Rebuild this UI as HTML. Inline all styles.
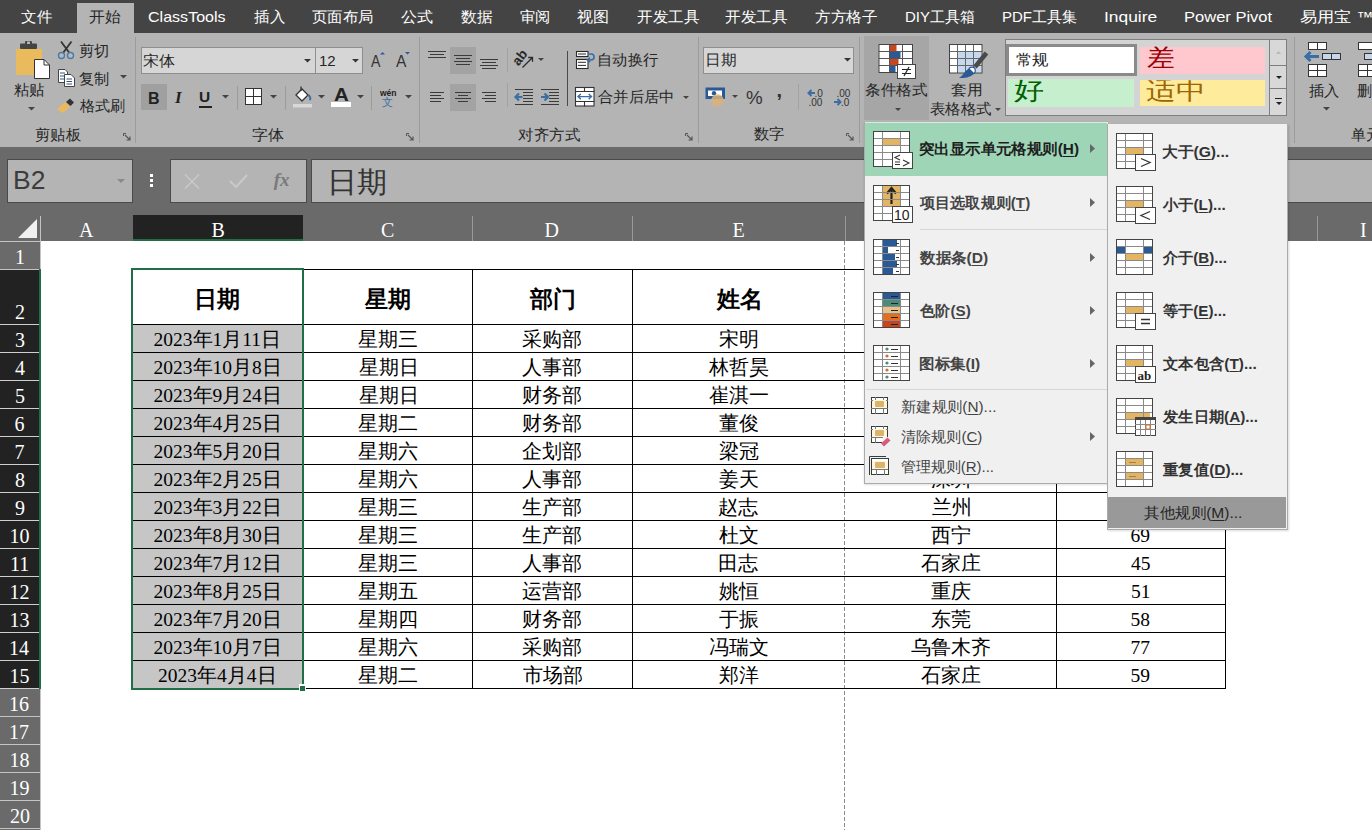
<!DOCTYPE html>
<html><head><meta charset="utf-8"><style>
html,body{margin:0;padding:0;width:1372px;height:830px;overflow:hidden;background:#fff}
.t{position:absolute;white-space:nowrap}
.b{position:absolute}
.s{position:absolute;overflow:visible}
body{font-family:'Liberation Sans',sans-serif}
u{text-decoration:underline;text-underline-offset:2px}
</style></head><body>
<div class="b" style="left:0px;top:0px;width:1372px;height:33px;background:#444444;"></div>
<div class="b" style="left:77px;top:3px;width:57px;height:30px;background:#b4b4b4;"></div>
<div class="t" style="left:21.0px;top:9.0px;font-size:15px;line-height:15px;color:#ffffff;font-weight:normal;font-family:'Liberation Sans',sans-serif;transform:scaleX(1.0345);transform-origin:0 0;">文件</div>
<div class="t" style="left:88.9px;top:9.0px;font-size:15px;line-height:15px;color:#262626;font-weight:normal;font-family:'Liberation Sans',sans-serif;transform:scaleX(1.0536);transform-origin:0 0;">开始</div>
<div class="t" style="left:147.9px;top:9.0px;font-size:15px;line-height:15px;color:#ffffff;font-weight:normal;font-family:'Liberation Sans',sans-serif;transform:scaleX(1.0704);transform-origin:0 0;">ClassTools</div>
<div class="t" style="left:254.0px;top:9.0px;font-size:15px;line-height:15px;color:#ffffff;font-weight:normal;font-family:'Liberation Sans',sans-serif;transform:scaleX(1.0345);transform-origin:0 0;">插入</div>
<div class="t" style="left:312.0px;top:9.0px;font-size:15px;line-height:15px;color:#ffffff;font-weight:normal;font-family:'Liberation Sans',sans-serif;transform:scaleX(1.0276);transform-origin:0 0;">页面布局</div>
<div class="t" style="left:400.6px;top:9.0px;font-size:15px;line-height:15px;color:#ffffff;font-weight:normal;font-family:'Liberation Sans',sans-serif;transform:scaleX(1.0714);transform-origin:0 0;">公式</div>
<div class="t" style="left:461.0px;top:9.0px;font-size:15px;line-height:15px;color:#ffffff;font-weight:normal;font-family:'Liberation Sans',sans-serif;transform:scaleX(1.0517);transform-origin:0 0;">数据</div>
<div class="t" style="left:520.0px;top:9.0px;font-size:15px;line-height:15px;color:#ffffff;font-weight:normal;font-family:'Liberation Sans',sans-serif;transform:scaleX(1.0143);transform-origin:0 0;">审阅</div>
<div class="t" style="left:577.4px;top:9.0px;font-size:15px;line-height:15px;color:#ffffff;font-weight:normal;font-family:'Liberation Sans',sans-serif;transform:scaleX(1.0714);transform-origin:0 0;">视图</div>
<div class="t" style="left:636.7px;top:9.0px;font-size:15px;line-height:15px;color:#ffffff;font-weight:normal;font-family:'Liberation Sans',sans-serif;transform:scaleX(1.0397);transform-origin:0 0;">开发工具</div>
<div class="t" style="left:725.0px;top:9.0px;font-size:15px;line-height:15px;color:#ffffff;font-weight:normal;font-family:'Liberation Sans',sans-serif;transform:scaleX(1.0414);transform-origin:0 0;">开发工具</div>
<div class="t" style="left:814.5px;top:9.0px;font-size:15px;line-height:15px;color:#ffffff;font-weight:normal;font-family:'Liberation Sans',sans-serif;transform:scaleX(1.0431);transform-origin:0 0;">方方格子</div>
<div class="t" style="left:905.0px;top:9.0px;font-size:15px;line-height:15px;color:#ffffff;font-weight:normal;font-family:'Liberation Sans',sans-serif;">DIY工具箱</div>
<div class="t" style="left:1002.0px;top:9.0px;font-size:15px;line-height:15px;color:#ffffff;font-weight:normal;font-family:'Liberation Sans',sans-serif;">PDF工具集</div>
<div class="t" style="left:1103.8px;top:9.0px;font-size:15px;line-height:15px;color:#ffffff;font-weight:normal;font-family:'Liberation Sans',sans-serif;transform:scaleX(1.1591);transform-origin:0 0;">Inquire</div>
<div class="t" style="left:1183.9px;top:9.0px;font-size:15px;line-height:15px;color:#ffffff;font-weight:normal;font-family:'Liberation Sans',sans-serif;transform:scaleX(1.1013);transform-origin:0 0;">Power Pivot</div>
<div class="t" style="left:1299.9px;top:9.0px;font-size:15px;line-height:15px;color:#ffffff;font-weight:normal;font-family:'Liberation Sans',sans-serif;transform:scaleX(1.1475);transform-origin:0 0;">易用宝 ™</div>
<div class="b" style="left:0px;top:33px;width:1372px;height:114px;background:#b4b4b4;"></div>
<svg class="s" style="left:14px;top:40px;" width="38" height="40" viewBox="0 0 38 40">
<rect x="2" y="9" width="26" height="26" fill="#e9bb5c"/>
<rect x="6" y="3.5" width="17" height="5.5" rx="1" fill="#444"/>
<rect x="11" y="1" width="7" height="5" rx="1" fill="#444"/><rect x="13" y="1.5" width="3" height="2.5" fill="#b4b4b4"/>
<path d="M20.5 19.5H30L35.5 25V38.5H20.5Z" fill="#fff" stroke="#333" stroke-width="1"/>
<path d="M30 19.5V25H35.5" fill="none" stroke="#333"/>
</svg>
<div class="t" style="left:13.7px;top:83.3px;font-size:14.5px;line-height:14.5px;color:#262626;font-weight:normal;font-family:'Liberation Sans',sans-serif;transform:scaleX(1.0241);transform-origin:0 0;">粘贴</div>
<svg class="s" style="left:27.5px;top:107.25px" width="7" height="3.5" viewBox="0 0 7 3.5"><path d="M0 0H7L3.5 3.5Z" fill="#444"/></svg>
<svg class="s" style="left:57px;top:41px;" width="19" height="18" viewBox="0 0 19 18">
<path d="M4 0.5L12.5 12M14.5 0.5L6 12" stroke="#333" stroke-width="1.8"/>
<circle cx="4.5" cy="14.5" r="3" fill="#a9bfd0" stroke="#55789a" stroke-width="1.4"/>
<circle cx="13.5" cy="14.5" r="3" fill="#a9bfd0" stroke="#55789a" stroke-width="1.4"/>
</svg>
<div class="t" style="left:79.0px;top:43.7px;font-size:14.5px;line-height:14.5px;color:#262626;font-weight:normal;font-family:'Liberation Sans',sans-serif;transform:scaleX(1.0179);transform-origin:0 0;">剪切</div>
<svg class="s" style="left:57px;top:68px;" width="20" height="20" viewBox="0 0 20 20">
<path d="M1.5 1.5H8L10.5 4V14.5H1.5Z" fill="#fff" stroke="#444"/>
<path d="M3 5H8M3 8H8M3 11H8" stroke="#34557a"/>
<path d="M7.5 6.5H14L17.5 10V18.5H7.5Z" fill="#fff" stroke="#444"/>
<path d="M9.5 11H15M9.5 13.5H15M9.5 16H15" stroke="#34557a"/>
</svg>
<div class="t" style="left:79.0px;top:71.5px;font-size:14.5px;line-height:14.5px;color:#262626;font-weight:normal;font-family:'Liberation Sans',sans-serif;transform:scaleX(1.0179);transform-origin:0 0;">复制</div>
<svg class="s" style="left:119.5px;top:75.25px" width="7" height="3.5" viewBox="0 0 7 3.5"><path d="M0 0H7L3.5 3.5Z" fill="#444"/></svg>
<svg class="s" style="left:55px;top:97px;" width="21" height="17" viewBox="0 0 21 17">
<path d="M2 12L10 5L15 10L8 16Z" fill="#e9b95e"/>
<path d="M11 5L15 1.5L19 5.5L15.5 9Z" fill="#333"/>
</svg>
<div class="t" style="left:80.0px;top:99.2px;font-size:14.5px;line-height:14.5px;color:#262626;font-weight:normal;font-family:'Liberation Sans',sans-serif;transform:scaleX(1.0091);transform-origin:0 0;">格式刷</div>
<div class="t" style="left:35.0px;top:127.5px;font-size:14.5px;line-height:14.5px;color:#262626;font-weight:normal;font-family:'Liberation Sans',sans-serif;transform:scaleX(1.0233);transform-origin:0 0;">剪贴板</div>
<svg class="s" style="left:123px;top:133px;" width="8" height="8" viewBox="0 0 8 8"><path d="M0.5 0.5H3M0.5 0.5V3" stroke="#555" fill="none"/><path d="M2 2L7 7M7 3.5V7H3.5" stroke="#555" fill="none" stroke-width="1.2"/></svg>
<div class="b" style="left:135px;top:37px;width:1px;height:106px;background:#9c9c9c;"></div>
<div class="b" style="left:141px;top:47px;width:175px;height:27px;background:#d6d6d6;box-shadow:inset 0 0 0 1px #8e8e8e"></div>
<div class="b" style="left:315px;top:47px;width:48px;height:27px;background:#d6d6d6;box-shadow:inset 0 0 0 1px #8e8e8e"></div>
<div class="t" style="left:142.9px;top:54.0px;font-size:14.5px;line-height:14.5px;color:#262626;font-weight:normal;font-family:'Liberation Sans',sans-serif;transform:scaleX(1.0714);transform-origin:0 0;">宋体</div>
<svg class="s" style="left:304.0px;top:58.75px" width="7" height="3.5" viewBox="0 0 7 3.5"><path d="M0 0H7L3.5 3.5Z" fill="#333"/></svg>
<div class="t" style="left:319.0px;top:53.0px;font-size:15px;line-height:15px;color:#262626;font-weight:normal;font-family:'Liberation Sans',sans-serif;">12</div>
<svg class="s" style="left:351.5px;top:58.75px" width="7" height="3.5" viewBox="0 0 7 3.5"><path d="M0 0H7L3.5 3.5Z" fill="#333"/></svg>
<div class="t" style="left:371.3px;top:53.6px;font-size:16px;line-height:16px;color:#333;font-weight:normal;font-family:'Liberation Sans',sans-serif;transform:scaleX(0.8818);transform-origin:0 0;">A</div>
<div class="t" style="left:396.0px;top:54.0px;font-size:16px;line-height:16px;color:#333;font-weight:normal;font-family:'Liberation Sans',sans-serif;transform:scaleX(0.9727);transform-origin:0 0;">A</div>
<svg class="s" style="left:379.5px;top:51.5px;" width="5" height="2.5" viewBox="0 0 5 2.5"><path d="M0 2.5L2.5 0L5 2.5Z" fill="#2a5a95"/></svg>
<svg class="s" style="left:404.5px;top:52px;" width="5" height="2.5" viewBox="0 0 5 2.5"><path d="M0 0H5L2.5 2.5Z" fill="#2a5a95"/></svg>
<div class="b" style="left:141px;top:84px;width:26px;height:26px;background:#a0a0a0;"></div>
<div class="t" style="left:148.0px;top:90.5px;font-size:16px;line-height:16px;color:#222;font-weight:bold;font-family:'Liberation Sans',sans-serif;">B</div>
<div class="t" style="left:175.0px;top:89.0px;font-size:17px;line-height:17px;color:#222;font-weight:bold;font-family:'Liberation Serif',serif;font-style:italic">I</div>
<div class="t" style="left:199.0px;top:88.5px;font-size:15.5px;line-height:15.5px;color:#222;font-weight:bold;font-family:'Liberation Sans',sans-serif;">U</div>
<div class="b" style="left:199px;top:106px;width:13px;height:1.5px;background:#222;"></div>
<svg class="s" style="left:221.5px;top:95.25px" width="7" height="3.5" viewBox="0 0 7 3.5"><path d="M0 0H7L3.5 3.5Z" fill="#444"/></svg>
<div class="b" style="left:237px;top:86px;width:1px;height:24px;background:#9c9c9c;"></div>
<svg class="s" style="left:245px;top:88px;" width="18" height="18" viewBox="0 0 18 18"><rect x="0.5" y="0.5" width="16" height="16" fill="#fff" stroke="#333"/><path d="M8.5 0V17M0 8.5H17" stroke="#333"/></svg>
<svg class="s" style="left:269.5px;top:95.25px" width="7" height="3.5" viewBox="0 0 7 3.5"><path d="M0 0H7L3.5 3.5Z" fill="#444"/></svg>
<div class="b" style="left:285px;top:86px;width:1px;height:24px;background:#9c9c9c;"></div>
<svg class="s" style="left:292px;top:85px;" width="22" height="23" viewBox="0 0 22 23">
<path d="M4 10L10 4L16 10L10 16Z" fill="#fff" stroke="#333" stroke-width="1.3"/>
<path d="M9 1.5V6" stroke="#333" stroke-width="1.3"/>
<path d="M16.5 10C18.5 12 19 14 17.5 15" stroke="#3a6ea5" stroke-width="2" fill="none"/>
<rect x="1" y="19" width="19" height="3.5" fill="#d8d8d8"/>
</svg>
<svg class="s" style="left:317.5px;top:95.25px" width="7" height="3.5" viewBox="0 0 7 3.5"><path d="M0 0H7L3.5 3.5Z" fill="#444"/></svg>
<div class="t" style="left:333.6px;top:85.9px;font-size:18px;line-height:18px;color:#222;font-weight:bold;font-family:'Liberation Sans',sans-serif;transform:scaleX(1.1364);transform-origin:0 0;">A</div>
<div class="b" style="left:331px;top:102px;width:20px;height:4.5px;background:#ffffff;"></div>
<svg class="s" style="left:356.5px;top:95.25px" width="7" height="3.5" viewBox="0 0 7 3.5"><path d="M0 0H7L3.5 3.5Z" fill="#444"/></svg>
<div class="b" style="left:371px;top:86px;width:1px;height:24px;background:#9c9c9c;"></div>
<div class="t" style="left:380.0px;top:88.5px;font-size:8.5px;line-height:8.5px;color:#222;font-weight:bold;font-family:'Liberation Sans',sans-serif;">wén</div>
<div class="t" style="left:382.0px;top:96.5px;font-size:11px;line-height:11px;color:#3a6ea5;font-weight:normal;font-family:'Liberation Sans',sans-serif;">文</div>
<svg class="s" style="left:404.5px;top:95.25px" width="7" height="3.5" viewBox="0 0 7 3.5"><path d="M0 0H7L3.5 3.5Z" fill="#444"/></svg>
<div class="t" style="left:251.9px;top:127.5px;font-size:14.5px;line-height:14.5px;color:#262626;font-weight:normal;font-family:'Liberation Sans',sans-serif;transform:scaleX(1.0714);transform-origin:0 0;">字体</div>
<svg class="s" style="left:406px;top:133px;" width="8" height="8" viewBox="0 0 8 8"><path d="M0.5 0.5H3M0.5 0.5V3" stroke="#555" fill="none"/><path d="M2 2L7 7M7 3.5V7H3.5" stroke="#555" fill="none" stroke-width="1.2"/></svg>
<div class="b" style="left:419px;top:37px;width:1px;height:106px;background:#9c9c9c;"></div>
<div class="b" style="left:428px;top:51px;width:18px;height:1.2000000000000028px;background:#3a3a3a;"></div>
<div class="b" style="left:430px;top:54px;width:14px;height:1.2000000000000028px;background:#3a3a3a;"></div>
<div class="b" style="left:428px;top:57px;width:18px;height:1.2000000000000028px;background:#3a3a3a;"></div>
<div class="b" style="left:450px;top:47px;width:26px;height:27px;background:#a3a3a3;"></div>
<div class="b" style="left:454px;top:55px;width:18px;height:1.2000000000000028px;background:#3a3a3a;"></div>
<div class="b" style="left:456px;top:58px;width:14px;height:1.2000000000000028px;background:#3a3a3a;"></div>
<div class="b" style="left:454px;top:61px;width:18px;height:1.2000000000000028px;background:#3a3a3a;"></div>
<div class="b" style="left:456px;top:64px;width:14px;height:1.2000000000000028px;background:#3a3a3a;"></div>
<div class="b" style="left:480px;top:59px;width:18px;height:1.2000000000000028px;background:#3a3a3a;"></div>
<div class="b" style="left:482px;top:62px;width:14px;height:1.2000000000000028px;background:#3a3a3a;"></div>
<div class="b" style="left:480px;top:65px;width:18px;height:1.2000000000000028px;background:#3a3a3a;"></div>
<div class="b" style="left:482px;top:68px;width:14px;height:1.2000000000000028px;background:#3a3a3a;"></div>
<div class="b" style="left:507px;top:48px;width:1px;height:24px;background:#a2a2a2;"></div>
<svg class="s" style="left:512px;top:49px;" width="24" height="20" viewBox="0 0 24 20">
<text x="0" y="0" font-family="Liberation Sans" font-size="13.5" font-weight="bold" fill="#2a2a2a" transform="translate(6.5 17.5) rotate(-52)">ab</text>
<path d="M10.5 18.5L20.5 8.5M16.2 8.5H20.5V12.8" stroke="#2a2a2a" stroke-width="1.3" fill="none"/>
</svg>
<svg class="s" style="left:538.3px;top:58.2px" width="6" height="3.0" viewBox="0 0 6 3.0"><path d="M0 0H6L3.0 3.0Z" fill="#444"/></svg>
<div class="b" style="left:567px;top:51px;width:1.3999999999999773px;height:55px;background:#4a4a4a;"></div>
<svg class="s" style="left:575px;top:50px;" width="22" height="20" viewBox="0 0 22 20">
<rect x="1.5" y="1.5" width="11.5" height="5" fill="#fff" stroke="#2a2a2a" stroke-width="1.1"/>
<path d="M3 4H11" stroke="#2a2a2a" stroke-width="1"/>
<rect x="1.5" y="9.5" width="11.5" height="9" fill="#fff" stroke="#2a2a2a" stroke-width="1.1"/>
<path d="M3 12.3H11M3 15.4H11" stroke="#2a2a2a" stroke-width="1"/>
<path d="M13 4H16.5C20 4 20 10 16 10H13M15 7.8L12.5 10L15 12.2" stroke="#3a6ea5" stroke-width="1.7" fill="none"/>
</svg>
<div class="t" style="left:597.0px;top:53.4px;font-size:14.5px;line-height:14.5px;color:#262626;font-weight:normal;font-family:'Liberation Sans',sans-serif;transform:scaleX(1.0172);transform-origin:0 0;">自动换行</div>
<div class="b" style="left:430px;top:92px;width:14px;height:1.2000000000000028px;background:#3a3a3a;"></div>
<div class="b" style="left:430px;top:95px;width:11px;height:1.2000000000000028px;background:#3a3a3a;"></div>
<div class="b" style="left:430px;top:98px;width:14px;height:1.2000000000000028px;background:#3a3a3a;"></div>
<div class="b" style="left:430px;top:101px;width:11px;height:1.2000000000000028px;background:#3a3a3a;"></div>
<div class="b" style="left:450px;top:84px;width:26px;height:27px;background:#a3a3a3;"></div>
<div class="b" style="left:455px;top:92px;width:16px;height:1.2000000000000028px;background:#3a3a3a;"></div>
<div class="b" style="left:458px;top:95px;width:10px;height:1.2000000000000028px;background:#3a3a3a;"></div>
<div class="b" style="left:455px;top:98px;width:16px;height:1.2000000000000028px;background:#3a3a3a;"></div>
<div class="b" style="left:458px;top:101px;width:10px;height:1.2000000000000028px;background:#3a3a3a;"></div>
<div class="b" style="left:482px;top:92px;width:14px;height:1.2000000000000028px;background:#3a3a3a;"></div>
<div class="b" style="left:485px;top:95px;width:11px;height:1.2000000000000028px;background:#3a3a3a;"></div>
<div class="b" style="left:482px;top:98px;width:14px;height:1.2000000000000028px;background:#3a3a3a;"></div>
<div class="b" style="left:485px;top:101px;width:11px;height:1.2000000000000028px;background:#3a3a3a;"></div>
<div class="b" style="left:507px;top:83px;width:1px;height:24px;background:#a2a2a2;"></div>
<svg class="s" style="left:514px;top:88px;" width="20" height="18" viewBox="0 0 20 18">
<path d="M1 1.5H19M9 4.5H19M9 7.5H19M9 10.5H19M9 13.5H19M1 16.5H19" stroke="#3a3a3a" stroke-width="1.1"/>
<path d="M1.5 9H8.5M5 5.5L1.5 9L5 12.5" stroke="#3a6ea5" stroke-width="2.2" fill="none"/>
</svg>
<svg class="s" style="left:540px;top:88px;" width="20" height="18" viewBox="0 0 20 18">
<path d="M1 1.5H19M9 4.5H19M9 7.5H19M9 10.5H19M9 13.5H19M1 16.5H19" stroke="#3a3a3a" stroke-width="1.1"/>
<path d="M1 9H8M4.5 5.5L8 9L4.5 12.5" stroke="#3a6ea5" stroke-width="2.2" fill="none"/>
</svg>
<svg class="s" style="left:575px;top:87px;" width="20" height="20" viewBox="0 0 20 20">
<rect x="0.5" y="0.5" width="18.5" height="18.5" fill="#fff" stroke="#333" stroke-width="1.1"/>
<path d="M0 4.5H19.5M0 14.5H19.5M9.5 0V4.5M9.5 14.5V19.5" stroke="#333" stroke-width="1.1"/>
<path d="M3 9.6H16.5M5.8 7L3 9.6L5.8 12.2M13.7 7L16.5 9.6L13.7 12.2" stroke="#3a6ea5" stroke-width="1.4" fill="none"/>
</svg>
<div class="t" style="left:597.5px;top:90.4px;font-size:14.5px;line-height:14.5px;color:#262626;font-weight:normal;font-family:'Liberation Sans',sans-serif;transform:scaleX(1.0208);transform-origin:0 0;">合并后居中</div>
<svg class="s" style="left:683.0px;top:95.5px" width="6" height="3.0" viewBox="0 0 6 3.0"><path d="M0 0H6L3.0 3.0Z" fill="#444"/></svg>
<div class="t" style="left:518.0px;top:127.5px;font-size:14.5px;line-height:14.5px;color:#262626;font-weight:normal;font-family:'Liberation Sans',sans-serif;transform:scaleX(1.0345);transform-origin:0 0;">对齐方式</div>
<svg class="s" style="left:685px;top:133px;" width="8" height="8" viewBox="0 0 8 8"><path d="M0.5 0.5H3M0.5 0.5V3" stroke="#555" fill="none"/><path d="M2 2L7 7M7 3.5V7H3.5" stroke="#555" fill="none" stroke-width="1.2"/></svg>
<div class="b" style="left:698px;top:37px;width:1px;height:106px;background:#9c9c9c;"></div>
<div class="b" style="left:703px;top:47px;width:151px;height:27px;background:#d6d6d6;box-shadow:inset 0 0 0 1px #8e8e8e"></div>
<div class="t" style="left:705.3px;top:52.8px;font-size:14.5px;line-height:14.5px;color:#262626;font-weight:normal;font-family:'Liberation Sans',sans-serif;transform:scaleX(1.0481);transform-origin:0 0;">日期</div>
<svg class="s" style="left:843.5px;top:58.25px" width="7" height="3.5" viewBox="0 0 7 3.5"><path d="M0 0H7L3.5 3.5Z" fill="#333"/></svg>
<svg class="s" style="left:705px;top:87px;" width="22" height="21" viewBox="0 0 22 21">
<rect x="0.5" y="0.5" width="19.5" height="11.5" fill="#2a5a95"/>
<path d="M3 3.5H17V9H3Z" fill="#fff"/>
<circle cx="9" cy="6.3" r="2.2" fill="#2a5a95"/>
<circle cx="12.5" cy="13.5" r="6.3" fill="#d9b27a" opacity="0.85"/>
</svg>
<svg class="s" style="left:732.0px;top:95.0px" width="6" height="3.0" viewBox="0 0 6 3.0"><path d="M0 0H6L3.0 3.0Z" fill="#444"/></svg>
<div class="t" style="left:745.9px;top:89.5px;font-size:17.5px;line-height:17.5px;color:#333;font-weight:normal;font-family:'Liberation Sans',sans-serif;transform:scaleX(1.0714);transform-origin:0 0;">%</div>
<div class="t" style="left:776.5px;top:79.5px;font-size:20px;line-height:20px;color:#333;font-weight:bold;font-family:'Liberation Sans',sans-serif;">,</div>
<div class="b" style="left:798px;top:84px;width:1px;height:26px;background:#a2a2a2;"></div>
<svg class="s" style="left:807px;top:88px;" width="19" height="19" viewBox="0 0 19 19">
<path d="M1.5 5H8M4.5 2L1.5 5L4.5 8" stroke="#3a6ea5" stroke-width="2" fill="none"/>
<text x="7.5" y="8.5" font-family="Liberation Sans" font-size="10" fill="#333">.0</text>
<text x="1.5" y="17.5" font-family="Liberation Sans" font-size="10" fill="#333">.00</text>
</svg>
<svg class="s" style="left:832px;top:88px;" width="19" height="19" viewBox="0 0 19 19">
<text x="4.5" y="8.5" font-family="Liberation Sans" font-size="10" fill="#333">.00</text>
<path d="M2 14H8.5M5.5 11L8.5 14L5.5 17" stroke="#3a6ea5" stroke-width="2" fill="none"/>
<text x="9" y="17.5" font-family="Liberation Sans" font-size="10" fill="#333">.0</text>
</svg>
<div class="t" style="left:754.0px;top:127.3px;font-size:14.5px;line-height:14.5px;color:#262626;font-weight:normal;font-family:'Liberation Sans',sans-serif;transform:scaleX(1.0207);transform-origin:0 0;">数字</div>
<svg class="s" style="left:846px;top:133px;" width="8" height="8" viewBox="0 0 8 8"><path d="M0.5 0.5H3M0.5 0.5V3" stroke="#555" fill="none"/><path d="M2 2L7 7M7 3.5V7H3.5" stroke="#555" fill="none" stroke-width="1.2"/></svg>
<div class="b" style="left:859px;top:37px;width:1px;height:106px;background:#9c9c9c;"></div>
<div class="b" style="left:864px;top:36px;width:65px;height:84px;background:#a6a6a6;"></div>
<svg class="s" style="left:878px;top:44px;" width="39" height="36" viewBox="0 0 39 36">
<rect x="1" y="0.5" width="33.5" height="28" fill="#fff"/>
<rect x="11.5" y="1" width="7" height="7" fill="#c8451e"/>
<rect x="11.5" y="8" width="11" height="7" fill="#2a5a95"/>
<rect x="11.5" y="15" width="9" height="7" fill="#c8451e"/>
<rect x="11.5" y="22" width="6" height="6.5" fill="#2a5a95"/>
<path d="M11.5 0V29M24.5 0V29M1 7.5H35M1 14.5H35M1 21.5H35" stroke="#555" stroke-width="1"/>
<rect x="1" y="0.5" width="33.5" height="28" fill="none" stroke="#444"/>
<rect x="19.5" y="20.5" width="18" height="14" fill="#fff" stroke="#444"/>
<path d="M24 25.5H33M24 29.5H33M31 23L26 32" stroke="#222" stroke-width="1.2"/>
</svg>
<div class="t" style="left:865.0px;top:83.3px;font-size:14.5px;line-height:14.5px;color:#262626;font-weight:normal;font-family:'Liberation Sans',sans-serif;transform:scaleX(1.0448);transform-origin:0 0;">条件格式</div>
<svg class="s" style="left:895.0px;top:107.5px" width="6" height="3.0" viewBox="0 0 6 3.0"><path d="M0 0H6L3.0 3.0Z" fill="#444"/></svg>
<svg class="s" style="left:948px;top:43px;" width="40" height="38" viewBox="0 0 40 38">
<rect x="1.5" y="1.5" width="32.5" height="28.5" fill="#fff"/>
<rect x="9.5" y="8.5" width="24" height="21" fill="#c5d8ee"/>
<path d="M9.5 1V30M17.5 1V30M25.5 1V30M1 8.5H34M1 15.5H34M1 22.5H34" stroke="#666" stroke-width="1"/>
<rect x="1.5" y="1.5" width="32.5" height="28.5" fill="none" stroke="#444"/>
<path d="M38.5 10L27 24" stroke="#4a4a4a" stroke-width="4.5"/>
<circle cx="24" cy="27.5" r="3.3" fill="#fff" stroke="#2a5a95" stroke-width="1.2"/>
<path d="M21.5 25.5C17 27 15 33 11 35C17 35.5 24 34 26 30Z" fill="#2a5a95"/>
</svg>
<div class="t" style="left:950.7px;top:83.3px;font-size:14.5px;line-height:14.5px;color:#262626;font-weight:normal;font-family:'Liberation Sans',sans-serif;transform:scaleX(1.0556);transform-origin:0 0;">套用</div>
<div class="t" style="left:929.8px;top:102.3px;font-size:14.5px;line-height:14.5px;color:#262626;font-weight:normal;font-family:'Liberation Sans',sans-serif;transform:scaleX(1.0310);transform-origin:0 0;">表格格式</div>
<svg class="s" style="left:995.3px;top:107.8px" width="6" height="3.0" viewBox="0 0 6 3.0"><path d="M0 0H6L3.0 3.0Z" fill="#444"/></svg>
<div class="b" style="left:1005px;top:39px;width:282px;height:77px;background:#d4d4d4;"></div>
<div class="b" style="left:1006px;top:44px;width:131px;height:32px;background:#ffffff;box-shadow:inset 0 0 0 3px #8a8a8a"></div>
<div class="t" style="left:1015.8px;top:51.5px;font-size:15px;line-height:15px;color:#222;font-weight:normal;font-family:'Liberation Sans',sans-serif;transform:scaleX(1.0933);transform-origin:0 0;">常规</div>
<div class="b" style="left:1140px;top:46.5px;width:125px;height:27.0px;background:#ffc7ce;"></div>
<div class="t" style="left:1146.6px;top:44.5px;font-size:25px;line-height:25px;color:#9c0006;font-weight:normal;font-family:'Liberation Sans',sans-serif;transform:scaleX(1.1087);transform-origin:0 0;clip-path:inset(2.0px 0 0 0);">差</div>
<div class="b" style="left:1008px;top:79px;width:126px;height:27.5px;background:#c6efce;"></div>
<div class="t" style="left:1014.3px;top:77.5px;font-size:25px;line-height:25px;color:#006100;font-weight:normal;font-family:'Liberation Sans',sans-serif;transform:scaleX(1.1957);transform-origin:0 0;clip-path:inset(2.0px 0 0 0);">好</div>
<div class="b" style="left:1140px;top:79.5px;width:125px;height:26.5px;background:#ffeb9c;"></div>
<div class="t" style="left:1145.8px;top:78.0px;font-size:25px;line-height:25px;color:#9c6500;font-weight:normal;font-family:'Liberation Sans',sans-serif;transform:scaleX(1.1870);transform-origin:0 0;clip-path:inset(2.3px 0 0 0);">适中</div>
<div class="b" style="left:1270px;top:40px;width:16px;height:75px;background:#d8d8d8;"></div>
<div class="b" style="left:1269px;top:39px;width:1px;height:77px;background:#7e7e7e;"></div>
<div class="b" style="left:1269px;top:65px;width:18px;height:1px;background:#7e7e7e;"></div>
<div class="b" style="left:1269px;top:88px;width:18px;height:1px;background:#7e7e7e;"></div>
<div class="b" style="left:1005px;top:39px;width:282px;height:77px;background:transparent;box-shadow:inset 0 0 0 1px #7e7e7e"></div>
<svg class="s" style="left:1276px;top:50.5px;" width="5" height="3" viewBox="0 0 5 3"><path d="M0 3H5L2.5 0Z" fill="#b8b8b8"/></svg>
<svg class="s" style="left:1275.5px;top:75.5px" width="6" height="3.0" viewBox="0 0 6 3.0"><path d="M0 0H6L3.0 3.0Z" fill="#222"/></svg>
<div class="b" style="left:1275px;top:98px;width:7px;height:1.2000000000000028px;background:#222;"></div>
<svg class="s" style="left:1275.5px;top:101.5px" width="6" height="3.0" viewBox="0 0 6 3.0"><path d="M0 0H6L3.0 3.0Z" fill="#222"/></svg>
<div class="b" style="left:1294px;top:37px;width:1px;height:106px;background:#9c9c9c;"></div>
<svg class="s" style="left:1304px;top:41px;" width="40" height="37" viewBox="0 0 40 37">
<rect x="4.5" y="1.5" width="18" height="7" fill="#fff" stroke="#333"/><path d="M13.5 1V9" stroke="#333"/>
<rect x="18.5" y="12.5" width="18" height="6" fill="#c5d6ea" stroke="#333"/><path d="M27.5 12V19" stroke="#333"/>
<path d="M2 15.5H15M6.5 11L2 15.5L6.5 20" stroke="#3a6ea5" stroke-width="3" fill="none"/>
<rect x="4.5" y="23.5" width="18" height="12" fill="#fff" stroke="#333"/><path d="M13.5 23V36M4 29.5H23" stroke="#333"/>
</svg>
<div class="t" style="left:1309.0px;top:83.5px;font-size:14.5px;line-height:14.5px;color:#262626;font-weight:normal;font-family:'Liberation Sans',sans-serif;transform:scaleX(1.0207);transform-origin:0 0;">插入</div>
<svg class="s" style="left:1322.5px;top:107.25px" width="7" height="3.5" viewBox="0 0 7 3.5"><path d="M0 0H7L3.5 3.5Z" fill="#444"/></svg>
<svg class="s" style="left:1357px;top:41px;" width="16" height="37" viewBox="0 0 16 37">
<rect x="1.5" y="1.5" width="20" height="7" fill="#fff" stroke="#333"/>
<rect x="7.5" y="12.5" width="20" height="6" fill="#c5d6ea" stroke="#333"/>
<rect x="1.5" y="23.5" width="20" height="12" fill="#fff" stroke="#333"/><path d="M10.5 23V36M1 29.5H22" stroke="#333"/>
</svg>
<div class="t" style="left:1357.0px;top:83.5px;font-size:14.5px;line-height:14.5px;color:#262626;font-weight:normal;font-family:'Liberation Sans',sans-serif;">删除</div>
<div class="t" style="left:1351.0px;top:127.5px;font-size:14.5px;line-height:14.5px;color:#262626;font-weight:normal;font-family:'Liberation Sans',sans-serif;">单元格</div>
<div class="b" style="left:0px;top:147px;width:1372px;height:68px;background:#6a6a6a;"></div>
<div class="b" style="left:7px;top:159px;width:126px;height:44px;background:#b4b4b4;box-shadow:inset 0 0 0 1px #4a4a4a"></div>
<div class="t" style="left:13.0px;top:166.5px;font-size:26px;line-height:26px;color:#3c3c3c;font-weight:normal;font-family:'Liberation Sans',sans-serif;transform:scaleX(1.0172);transform-origin:0 0;">B2</div>
<svg class="s" style="left:117.0px;top:178.5px" width="8" height="4.0" viewBox="0 0 8 4.0"><path d="M0 0H8L4.0 4.0Z" fill="#8a8a8a"/></svg>
<div class="b" style="left:150px;top:174px;width:3px;height:3px;background:#ffffff;"></div>
<div class="b" style="left:150px;top:179px;width:3px;height:3px;background:#ffffff;"></div>
<div class="b" style="left:150px;top:184px;width:3px;height:3px;background:#ffffff;"></div>
<div class="b" style="left:170px;top:159px;width:137px;height:44px;background:#b4b4b4;box-shadow:inset 0 0 0 1px #4a4a4a"></div>
<svg class="s" style="left:182px;top:172px;" width="22" height="18" viewBox="0 0 22 18"><path d="M3 2.5L17 16.5M17 2.5L3 16.5" stroke="#c9c9c9" stroke-width="1.6"/></svg>
<svg class="s" style="left:228px;top:172px;" width="22" height="18" viewBox="0 0 22 18"><path d="M2 9L8 15L19 3" stroke="#c9c9c9" stroke-width="2" fill="none"/></svg>
<div class="t" style="left:273.7px;top:169.7px;font-size:19px;line-height:19px;color:#7a7a7a;font-weight:bold;font-family:'Liberation Serif',serif;font-style:italic;letter-spacing:-1pxtransform:scaleX(1.2143);transform-origin:0 0;">fx</div>
<div class="b" style="left:311px;top:159px;width:1069px;height:44px;background:#b4b4b4;box-shadow:inset 0 0 0 1px #4a4a4a"></div>
<div class="t" style="left:326.8px;top:167.5px;font-size:29px;line-height:29px;color:#333333;font-weight:normal;font-family:'Liberation Sans',sans-serif;transform:scaleX(1.0385);transform-origin:0 0;">日期</div>
<div class="b" style="left:0px;top:215px;width:1372px;height:26px;background:#6a6a6a;"></div>
<div class="b" style="left:0px;top:215px;width:40px;height:26px;background:#6a6a6a;"></div>
<svg class="s" style="left:18px;top:219px;" width="19" height="19" viewBox="0 0 19 19"><path d="M19 0V19H0Z" fill="#f0f0f0"/></svg>
<div class="b" style="left:133px;top:216px;width:1px;height:25px;background:#9a9a9a;"></div>
<div class="t" style="left:79.0px;top:220.0px;font-size:20px;line-height:20px;color:#ffffff;font-weight:normal;font-family:'Liberation Serif',serif;">A</div>
<div class="b" style="left:133px;top:215px;width:170px;height:26px;background:#222222;"></div>
<div class="b" style="left:133px;top:239px;width:170px;height:2px;background:#1f6e45;"></div>
<div class="t" style="left:211.5px;top:220.0px;font-size:20px;line-height:20px;color:#ffffff;font-weight:normal;font-family:'Liberation Serif',serif;">B</div>
<div class="b" style="left:472px;top:216px;width:1px;height:25px;background:#9a9a9a;"></div>
<div class="t" style="left:381.0px;top:220.0px;font-size:20px;line-height:20px;color:#ffffff;font-weight:normal;font-family:'Liberation Serif',serif;">C</div>
<div class="b" style="left:632px;top:216px;width:1px;height:25px;background:#9a9a9a;"></div>
<div class="t" style="left:544.5px;top:220.0px;font-size:20px;line-height:20px;color:#ffffff;font-weight:normal;font-family:'Liberation Serif',serif;">D</div>
<div class="b" style="left:845px;top:216px;width:1px;height:25px;background:#9a9a9a;"></div>
<div class="t" style="left:732.5px;top:220.0px;font-size:20px;line-height:20px;color:#ffffff;font-weight:normal;font-family:'Liberation Serif',serif;">E</div>
<div class="b" style="left:1056px;top:216px;width:1px;height:25px;background:#9a9a9a;"></div>
<div class="t" style="left:944.5px;top:220.0px;font-size:20px;line-height:20px;color:#ffffff;font-weight:normal;font-family:'Liberation Serif',serif;">F</div>
<div class="b" style="left:1225px;top:216px;width:1px;height:25px;background:#9a9a9a;"></div>
<div class="t" style="left:1133.0px;top:220.0px;font-size:20px;line-height:20px;color:#ffffff;font-weight:normal;font-family:'Liberation Serif',serif;">G</div>
<div class="b" style="left:1317px;top:216px;width:1px;height:25px;background:#9a9a9a;"></div>
<div class="t" style="left:1263.5px;top:220.0px;font-size:20px;line-height:20px;color:#ffffff;font-weight:normal;font-family:'Liberation Serif',serif;">H</div>
<div class="b" style="left:1410px;top:216px;width:1px;height:25px;background:#9a9a9a;"></div>
<div class="t" style="left:1360.0px;top:220.0px;font-size:20px;line-height:20px;color:#ffffff;font-weight:normal;font-family:'Liberation Serif',serif;">I</div>
<div class="b" style="left:0px;top:241px;width:41px;height:589px;background:#6a6a6a;"></div>
<div class="b" style="left:0px;top:241px;width:40px;height:28px;background:#6a6a6a;"></div>
<div class="t" style="left:15.0px;top:246.5px;font-size:20px;line-height:20px;color:#ffffff;font-weight:normal;font-family:'Liberation Serif',serif;">1</div>
<div class="b" style="left:0px;top:269px;width:40px;height:55px;background:#222222;"></div>
<div class="t" style="left:15.0px;top:301.5px;font-size:20px;line-height:20px;color:#ffffff;font-weight:normal;font-family:'Liberation Serif',serif;">2</div>
<div class="b" style="left:0px;top:324px;width:40px;height:28px;background:#222222;"></div>
<div class="t" style="left:15.0px;top:329.5px;font-size:20px;line-height:20px;color:#ffffff;font-weight:normal;font-family:'Liberation Serif',serif;">3</div>
<div class="b" style="left:0px;top:352px;width:40px;height:28px;background:#222222;"></div>
<div class="t" style="left:15.0px;top:357.5px;font-size:20px;line-height:20px;color:#ffffff;font-weight:normal;font-family:'Liberation Serif',serif;">4</div>
<div class="b" style="left:0px;top:380px;width:40px;height:28px;background:#222222;"></div>
<div class="t" style="left:15.0px;top:385.5px;font-size:20px;line-height:20px;color:#ffffff;font-weight:normal;font-family:'Liberation Serif',serif;">5</div>
<div class="b" style="left:0px;top:408px;width:40px;height:28px;background:#222222;"></div>
<div class="t" style="left:14.5px;top:413.5px;font-size:20px;line-height:20px;color:#ffffff;font-weight:normal;font-family:'Liberation Serif',serif;">6</div>
<div class="b" style="left:0px;top:436px;width:40px;height:28px;background:#222222;"></div>
<div class="t" style="left:14.5px;top:441.5px;font-size:20px;line-height:20px;color:#ffffff;font-weight:normal;font-family:'Liberation Serif',serif;">7</div>
<div class="b" style="left:0px;top:464px;width:40px;height:28px;background:#222222;"></div>
<div class="t" style="left:15.0px;top:469.5px;font-size:20px;line-height:20px;color:#ffffff;font-weight:normal;font-family:'Liberation Serif',serif;">8</div>
<div class="b" style="left:0px;top:492px;width:40px;height:28px;background:#222222;"></div>
<div class="t" style="left:15.0px;top:497.5px;font-size:20px;line-height:20px;color:#ffffff;font-weight:normal;font-family:'Liberation Serif',serif;">9</div>
<div class="b" style="left:0px;top:520px;width:40px;height:28px;background:#222222;"></div>
<div class="t" style="left:9.5px;top:525.5px;font-size:20px;line-height:20px;color:#ffffff;font-weight:normal;font-family:'Liberation Serif',serif;">10</div>
<div class="b" style="left:0px;top:548px;width:40px;height:28px;background:#222222;"></div>
<div class="t" style="left:10.0px;top:553.5px;font-size:20px;line-height:20px;color:#ffffff;font-weight:normal;font-family:'Liberation Serif',serif;">11</div>
<div class="b" style="left:0px;top:576px;width:40px;height:28px;background:#222222;"></div>
<div class="t" style="left:9.5px;top:581.5px;font-size:20px;line-height:20px;color:#ffffff;font-weight:normal;font-family:'Liberation Serif',serif;">12</div>
<div class="b" style="left:0px;top:604px;width:40px;height:28px;background:#222222;"></div>
<div class="t" style="left:9.5px;top:609.5px;font-size:20px;line-height:20px;color:#ffffff;font-weight:normal;font-family:'Liberation Serif',serif;">13</div>
<div class="b" style="left:0px;top:632px;width:40px;height:28px;background:#222222;"></div>
<div class="t" style="left:9.0px;top:637.5px;font-size:20px;line-height:20px;color:#ffffff;font-weight:normal;font-family:'Liberation Serif',serif;">14</div>
<div class="b" style="left:0px;top:660px;width:40px;height:28px;background:#222222;"></div>
<div class="t" style="left:9.5px;top:665.5px;font-size:20px;line-height:20px;color:#ffffff;font-weight:normal;font-family:'Liberation Serif',serif;">15</div>
<div class="b" style="left:0px;top:688px;width:40px;height:28px;background:#6a6a6a;"></div>
<div class="t" style="left:9.0px;top:693.5px;font-size:20px;line-height:20px;color:#ffffff;font-weight:normal;font-family:'Liberation Serif',serif;">16</div>
<div class="b" style="left:0px;top:716px;width:40px;height:28px;background:#6a6a6a;"></div>
<div class="t" style="left:9.0px;top:721.5px;font-size:20px;line-height:20px;color:#ffffff;font-weight:normal;font-family:'Liberation Serif',serif;">17</div>
<div class="b" style="left:0px;top:744px;width:40px;height:28px;background:#6a6a6a;"></div>
<div class="t" style="left:9.5px;top:749.5px;font-size:20px;line-height:20px;color:#ffffff;font-weight:normal;font-family:'Liberation Serif',serif;">18</div>
<div class="b" style="left:0px;top:772px;width:40px;height:28px;background:#6a6a6a;"></div>
<div class="t" style="left:9.5px;top:777.5px;font-size:20px;line-height:20px;color:#ffffff;font-weight:normal;font-family:'Liberation Serif',serif;">19</div>
<div class="b" style="left:0px;top:800px;width:40px;height:28px;background:#6a6a6a;"></div>
<div class="t" style="left:10.0px;top:805.5px;font-size:20px;line-height:20px;color:#ffffff;font-weight:normal;font-family:'Liberation Serif',serif;">20</div>
<div class="b" style="left:0px;top:269px;width:40px;height:1px;background:#c4c4c4;"></div>
<div class="b" style="left:0px;top:324px;width:40px;height:1px;background:#cfcfcf;"></div>
<div class="b" style="left:0px;top:352px;width:40px;height:1px;background:#cfcfcf;"></div>
<div class="b" style="left:0px;top:380px;width:40px;height:1px;background:#cfcfcf;"></div>
<div class="b" style="left:0px;top:408px;width:40px;height:1px;background:#cfcfcf;"></div>
<div class="b" style="left:0px;top:436px;width:40px;height:1px;background:#cfcfcf;"></div>
<div class="b" style="left:0px;top:464px;width:40px;height:1px;background:#cfcfcf;"></div>
<div class="b" style="left:0px;top:492px;width:40px;height:1px;background:#cfcfcf;"></div>
<div class="b" style="left:0px;top:520px;width:40px;height:1px;background:#cfcfcf;"></div>
<div class="b" style="left:0px;top:548px;width:40px;height:1px;background:#cfcfcf;"></div>
<div class="b" style="left:0px;top:576px;width:40px;height:1px;background:#cfcfcf;"></div>
<div class="b" style="left:0px;top:604px;width:40px;height:1px;background:#cfcfcf;"></div>
<div class="b" style="left:0px;top:632px;width:40px;height:1px;background:#cfcfcf;"></div>
<div class="b" style="left:0px;top:660px;width:40px;height:1px;background:#cfcfcf;"></div>
<div class="b" style="left:0px;top:688px;width:40px;height:1px;background:#cfcfcf;"></div>
<div class="b" style="left:0px;top:716px;width:40px;height:1px;background:#c4c4c4;"></div>
<div class="b" style="left:0px;top:744px;width:40px;height:1px;background:#c4c4c4;"></div>
<div class="b" style="left:0px;top:772px;width:40px;height:1px;background:#c4c4c4;"></div>
<div class="b" style="left:0px;top:800px;width:40px;height:1px;background:#c4c4c4;"></div>
<div class="b" style="left:0px;top:828px;width:40px;height:1px;background:#c4c4c4;"></div>
<div class="b" style="left:0px;top:241px;width:40px;height:1px;background:#c4c4c4;"></div>
<div class="b" style="left:40px;top:216px;width:1px;height:614px;background:#c4c4c4;"></div>
<div class="b" style="left:39px;top:269px;width:2px;height:420px;background:#1f6e45;"></div>
<div class="b" style="left:41px;top:241px;width:1331px;height:589px;background:#ffffff;"></div>
<div class="b" style="left:133px;top:324px;width:170px;height:364px;background:#c6c6c6;"></div>
<div class="b" style="left:844px;top:241px;width:1px;height:589px;background:repeating-linear-gradient(#8a8a8a 0 4px,transparent 4px 6px)"></div>
<div class="b" style="left:132px;top:269px;width:1px;height:420px;background:#000;"></div>
<div class="b" style="left:303px;top:269px;width:1px;height:420px;background:#000;"></div>
<div class="b" style="left:472px;top:269px;width:1px;height:420px;background:#000;"></div>
<div class="b" style="left:632px;top:269px;width:1px;height:420px;background:#000;"></div>
<div class="b" style="left:1056px;top:269px;width:1px;height:420px;background:#000;"></div>
<div class="b" style="left:1225px;top:269px;width:1px;height:420px;background:#000;"></div>
<div class="b" style="left:132px;top:269px;width:1094px;height:1px;background:#000;"></div>
<div class="b" style="left:132px;top:324px;width:1094px;height:1px;background:#000;"></div>
<div class="b" style="left:132px;top:352px;width:1094px;height:1px;background:#000;"></div>
<div class="b" style="left:132px;top:380px;width:1094px;height:1px;background:#000;"></div>
<div class="b" style="left:132px;top:408px;width:1094px;height:1px;background:#000;"></div>
<div class="b" style="left:132px;top:436px;width:1094px;height:1px;background:#000;"></div>
<div class="b" style="left:132px;top:464px;width:1094px;height:1px;background:#000;"></div>
<div class="b" style="left:132px;top:492px;width:1094px;height:1px;background:#000;"></div>
<div class="b" style="left:132px;top:520px;width:1094px;height:1px;background:#000;"></div>
<div class="b" style="left:132px;top:548px;width:1094px;height:1px;background:#000;"></div>
<div class="b" style="left:132px;top:576px;width:1094px;height:1px;background:#000;"></div>
<div class="b" style="left:132px;top:604px;width:1094px;height:1px;background:#000;"></div>
<div class="b" style="left:132px;top:632px;width:1094px;height:1px;background:#000;"></div>
<div class="b" style="left:132px;top:660px;width:1094px;height:1px;background:#000;"></div>
<div class="b" style="left:132px;top:688px;width:1094px;height:1px;background:#000;"></div>
<div class="t" style="left:193.5px;top:287.5px;font-size:23px;line-height:23px;color:#000;font-weight:bold;font-family:'Liberation Serif',serif;">日期</div>
<div class="t" style="left:365.0px;top:287.5px;font-size:23px;line-height:23px;color:#000;font-weight:bold;font-family:'Liberation Serif',serif;">星期</div>
<div class="t" style="left:530.0px;top:287.5px;font-size:23px;line-height:23px;color:#000;font-weight:bold;font-family:'Liberation Serif',serif;">部门</div>
<div class="t" style="left:717.0px;top:287.5px;font-size:23px;line-height:23px;color:#000;font-weight:bold;font-family:'Liberation Serif',serif;">姓名</div>
<div class="t" style="left:927.5px;top:287.5px;font-size:23px;line-height:23px;color:#000;font-weight:bold;font-family:'Liberation Serif',serif;">城市</div>
<div class="t" style="left:1117.5px;top:287.5px;font-size:23px;line-height:23px;color:#000;font-weight:bold;font-family:'Liberation Serif',serif;">成绩</div>
<div class="t" style="left:153.5px;top:329.5px;font-size:19.5px;line-height:19.5px;color:#000;font-weight:normal;font-family:'Liberation Serif',serif;">2023年1月11日</div>
<div class="t" style="left:357.5px;top:329.5px;font-size:19.5px;line-height:19.5px;color:#000;font-weight:normal;font-family:'Liberation Serif',serif;">星期三</div>
<div class="t" style="left:522.0px;top:329.5px;font-size:19.5px;line-height:19.5px;color:#000;font-weight:normal;font-family:'Liberation Serif',serif;">采购部</div>
<div class="t" style="left:719.0px;top:329.5px;font-size:19.5px;line-height:19.5px;color:#000;font-weight:normal;font-family:'Liberation Serif',serif;">宋明</div>
<div class="t" style="left:931.0px;top:329.5px;font-size:19.5px;line-height:19.5px;color:#000;font-weight:normal;font-family:'Liberation Serif',serif;">北京</div>
<div class="t" style="left:1130.5px;top:329.5px;font-size:19.5px;line-height:19.5px;color:#000;font-weight:normal;font-family:'Liberation Serif',serif;">80</div>
<div class="t" style="left:153.5px;top:357.5px;font-size:19.5px;line-height:19.5px;color:#000;font-weight:normal;font-family:'Liberation Serif',serif;">2023年10月8日</div>
<div class="t" style="left:358.5px;top:357.5px;font-size:19.5px;line-height:19.5px;color:#000;font-weight:normal;font-family:'Liberation Serif',serif;">星期日</div>
<div class="t" style="left:522.0px;top:357.5px;font-size:19.5px;line-height:19.5px;color:#000;font-weight:normal;font-family:'Liberation Serif',serif;">人事部</div>
<div class="t" style="left:709.0px;top:357.5px;font-size:19.5px;line-height:19.5px;color:#000;font-weight:normal;font-family:'Liberation Serif',serif;">林哲昊</div>
<div class="t" style="left:931.0px;top:357.5px;font-size:19.5px;line-height:19.5px;color:#000;font-weight:normal;font-family:'Liberation Serif',serif;">上海</div>
<div class="t" style="left:1130.5px;top:357.5px;font-size:19.5px;line-height:19.5px;color:#000;font-weight:normal;font-family:'Liberation Serif',serif;">72</div>
<div class="t" style="left:153.5px;top:385.5px;font-size:19.5px;line-height:19.5px;color:#000;font-weight:normal;font-family:'Liberation Serif',serif;">2023年9月24日</div>
<div class="t" style="left:358.5px;top:385.5px;font-size:19.5px;line-height:19.5px;color:#000;font-weight:normal;font-family:'Liberation Serif',serif;">星期日</div>
<div class="t" style="left:522.0px;top:385.5px;font-size:19.5px;line-height:19.5px;color:#000;font-weight:normal;font-family:'Liberation Serif',serif;">财务部</div>
<div class="t" style="left:708.5px;top:385.5px;font-size:19.5px;line-height:19.5px;color:#000;font-weight:normal;font-family:'Liberation Serif',serif;">崔淇一</div>
<div class="t" style="left:931.0px;top:385.5px;font-size:19.5px;line-height:19.5px;color:#000;font-weight:normal;font-family:'Liberation Serif',serif;">广州</div>
<div class="t" style="left:1130.5px;top:385.5px;font-size:19.5px;line-height:19.5px;color:#000;font-weight:normal;font-family:'Liberation Serif',serif;">66</div>
<div class="t" style="left:153.5px;top:413.5px;font-size:19.5px;line-height:19.5px;color:#000;font-weight:normal;font-family:'Liberation Serif',serif;">2023年4月25日</div>
<div class="t" style="left:357.5px;top:413.5px;font-size:19.5px;line-height:19.5px;color:#000;font-weight:normal;font-family:'Liberation Serif',serif;">星期二</div>
<div class="t" style="left:522.0px;top:413.5px;font-size:19.5px;line-height:19.5px;color:#000;font-weight:normal;font-family:'Liberation Serif',serif;">财务部</div>
<div class="t" style="left:718.5px;top:413.5px;font-size:19.5px;line-height:19.5px;color:#000;font-weight:normal;font-family:'Liberation Serif',serif;">董俊</div>
<div class="t" style="left:931.5px;top:413.5px;font-size:19.5px;line-height:19.5px;color:#000;font-weight:normal;font-family:'Liberation Serif',serif;">杭州</div>
<div class="t" style="left:1131.0px;top:413.5px;font-size:19.5px;line-height:19.5px;color:#000;font-weight:normal;font-family:'Liberation Serif',serif;">91</div>
<div class="t" style="left:153.5px;top:441.5px;font-size:19.5px;line-height:19.5px;color:#000;font-weight:normal;font-family:'Liberation Serif',serif;">2023年5月20日</div>
<div class="t" style="left:357.5px;top:441.5px;font-size:19.5px;line-height:19.5px;color:#000;font-weight:normal;font-family:'Liberation Serif',serif;">星期六</div>
<div class="t" style="left:522.0px;top:441.5px;font-size:19.5px;line-height:19.5px;color:#000;font-weight:normal;font-family:'Liberation Serif',serif;">企划部</div>
<div class="t" style="left:718.5px;top:441.5px;font-size:19.5px;line-height:19.5px;color:#000;font-weight:normal;font-family:'Liberation Serif',serif;">梁冠</div>
<div class="t" style="left:930.5px;top:441.5px;font-size:19.5px;line-height:19.5px;color:#000;font-weight:normal;font-family:'Liberation Serif',serif;">成都</div>
<div class="t" style="left:1130.5px;top:441.5px;font-size:19.5px;line-height:19.5px;color:#000;font-weight:normal;font-family:'Liberation Serif',serif;">83</div>
<div class="t" style="left:153.5px;top:469.5px;font-size:19.5px;line-height:19.5px;color:#000;font-weight:normal;font-family:'Liberation Serif',serif;">2023年2月25日</div>
<div class="t" style="left:357.5px;top:469.5px;font-size:19.5px;line-height:19.5px;color:#000;font-weight:normal;font-family:'Liberation Serif',serif;">星期六</div>
<div class="t" style="left:522.0px;top:469.5px;font-size:19.5px;line-height:19.5px;color:#000;font-weight:normal;font-family:'Liberation Serif',serif;">人事部</div>
<div class="t" style="left:718.5px;top:469.5px;font-size:19.5px;line-height:19.5px;color:#000;font-weight:normal;font-family:'Liberation Serif',serif;">姜天</div>
<div class="t" style="left:931.0px;top:469.5px;font-size:19.5px;line-height:19.5px;color:#000;font-weight:normal;font-family:'Liberation Serif',serif;">深圳</div>
<div class="t" style="left:1130.5px;top:469.5px;font-size:19.5px;line-height:19.5px;color:#000;font-weight:normal;font-family:'Liberation Serif',serif;">62</div>
<div class="t" style="left:153.5px;top:497.5px;font-size:19.5px;line-height:19.5px;color:#000;font-weight:normal;font-family:'Liberation Serif',serif;">2023年3月22日</div>
<div class="t" style="left:357.5px;top:497.5px;font-size:19.5px;line-height:19.5px;color:#000;font-weight:normal;font-family:'Liberation Serif',serif;">星期三</div>
<div class="t" style="left:522.0px;top:497.5px;font-size:19.5px;line-height:19.5px;color:#000;font-weight:normal;font-family:'Liberation Serif',serif;">生产部</div>
<div class="t" style="left:718.0px;top:497.5px;font-size:19.5px;line-height:19.5px;color:#000;font-weight:normal;font-family:'Liberation Serif',serif;">赵志</div>
<div class="t" style="left:931.5px;top:497.5px;font-size:19.5px;line-height:19.5px;color:#000;font-weight:normal;font-family:'Liberation Serif',serif;">兰州</div>
<div class="t" style="left:1130.5px;top:497.5px;font-size:19.5px;line-height:19.5px;color:#000;font-weight:normal;font-family:'Liberation Serif',serif;">74</div>
<div class="t" style="left:153.5px;top:525.5px;font-size:19.5px;line-height:19.5px;color:#000;font-weight:normal;font-family:'Liberation Serif',serif;">2023年8月30日</div>
<div class="t" style="left:357.5px;top:525.5px;font-size:19.5px;line-height:19.5px;color:#000;font-weight:normal;font-family:'Liberation Serif',serif;">星期三</div>
<div class="t" style="left:522.0px;top:525.5px;font-size:19.5px;line-height:19.5px;color:#000;font-weight:normal;font-family:'Liberation Serif',serif;">生产部</div>
<div class="t" style="left:719.0px;top:525.5px;font-size:19.5px;line-height:19.5px;color:#000;font-weight:normal;font-family:'Liberation Serif',serif;">杜文</div>
<div class="t" style="left:931.0px;top:525.5px;font-size:19.5px;line-height:19.5px;color:#000;font-weight:normal;font-family:'Liberation Serif',serif;">西宁</div>
<div class="t" style="left:1130.5px;top:525.5px;font-size:19.5px;line-height:19.5px;color:#000;font-weight:normal;font-family:'Liberation Serif',serif;">69</div>
<div class="t" style="left:153.5px;top:553.5px;font-size:19.5px;line-height:19.5px;color:#000;font-weight:normal;font-family:'Liberation Serif',serif;">2023年7月12日</div>
<div class="t" style="left:357.5px;top:553.5px;font-size:19.5px;line-height:19.5px;color:#000;font-weight:normal;font-family:'Liberation Serif',serif;">星期三</div>
<div class="t" style="left:522.0px;top:553.5px;font-size:19.5px;line-height:19.5px;color:#000;font-weight:normal;font-family:'Liberation Serif',serif;">人事部</div>
<div class="t" style="left:717.5px;top:553.5px;font-size:19.5px;line-height:19.5px;color:#000;font-weight:normal;font-family:'Liberation Serif',serif;">田志</div>
<div class="t" style="left:920.5px;top:553.5px;font-size:19.5px;line-height:19.5px;color:#000;font-weight:normal;font-family:'Liberation Serif',serif;">石家庄</div>
<div class="t" style="left:1131.0px;top:553.5px;font-size:19.5px;line-height:19.5px;color:#000;font-weight:normal;font-family:'Liberation Serif',serif;">45</div>
<div class="t" style="left:153.5px;top:581.5px;font-size:19.5px;line-height:19.5px;color:#000;font-weight:normal;font-family:'Liberation Serif',serif;">2023年8月25日</div>
<div class="t" style="left:357.5px;top:581.5px;font-size:19.5px;line-height:19.5px;color:#000;font-weight:normal;font-family:'Liberation Serif',serif;">星期五</div>
<div class="t" style="left:522.0px;top:581.5px;font-size:19.5px;line-height:19.5px;color:#000;font-weight:normal;font-family:'Liberation Serif',serif;">运营部</div>
<div class="t" style="left:718.5px;top:581.5px;font-size:19.5px;line-height:19.5px;color:#000;font-weight:normal;font-family:'Liberation Serif',serif;">姚恒</div>
<div class="t" style="left:930.5px;top:581.5px;font-size:19.5px;line-height:19.5px;color:#000;font-weight:normal;font-family:'Liberation Serif',serif;">重庆</div>
<div class="t" style="left:1131.0px;top:581.5px;font-size:19.5px;line-height:19.5px;color:#000;font-weight:normal;font-family:'Liberation Serif',serif;">51</div>
<div class="t" style="left:153.5px;top:609.5px;font-size:19.5px;line-height:19.5px;color:#000;font-weight:normal;font-family:'Liberation Serif',serif;">2023年7月20日</div>
<div class="t" style="left:358.0px;top:609.5px;font-size:19.5px;line-height:19.5px;color:#000;font-weight:normal;font-family:'Liberation Serif',serif;">星期四</div>
<div class="t" style="left:522.0px;top:609.5px;font-size:19.5px;line-height:19.5px;color:#000;font-weight:normal;font-family:'Liberation Serif',serif;">财务部</div>
<div class="t" style="left:719.0px;top:609.5px;font-size:19.5px;line-height:19.5px;color:#000;font-weight:normal;font-family:'Liberation Serif',serif;">于振</div>
<div class="t" style="left:930.5px;top:609.5px;font-size:19.5px;line-height:19.5px;color:#000;font-weight:normal;font-family:'Liberation Serif',serif;">东莞</div>
<div class="t" style="left:1130.5px;top:609.5px;font-size:19.5px;line-height:19.5px;color:#000;font-weight:normal;font-family:'Liberation Serif',serif;">58</div>
<div class="t" style="left:153.5px;top:637.5px;font-size:19.5px;line-height:19.5px;color:#000;font-weight:normal;font-family:'Liberation Serif',serif;">2023年10月7日</div>
<div class="t" style="left:357.5px;top:637.5px;font-size:19.5px;line-height:19.5px;color:#000;font-weight:normal;font-family:'Liberation Serif',serif;">星期六</div>
<div class="t" style="left:522.0px;top:637.5px;font-size:19.5px;line-height:19.5px;color:#000;font-weight:normal;font-family:'Liberation Serif',serif;">采购部</div>
<div class="t" style="left:708.5px;top:637.5px;font-size:19.5px;line-height:19.5px;color:#000;font-weight:normal;font-family:'Liberation Serif',serif;">冯瑞文</div>
<div class="t" style="left:911.0px;top:637.5px;font-size:19.5px;line-height:19.5px;color:#000;font-weight:normal;font-family:'Liberation Serif',serif;">乌鲁木齐</div>
<div class="t" style="left:1130.5px;top:637.5px;font-size:19.5px;line-height:19.5px;color:#000;font-weight:normal;font-family:'Liberation Serif',serif;">77</div>
<div class="t" style="left:158.0px;top:665.5px;font-size:19.5px;line-height:19.5px;color:#000;font-weight:normal;font-family:'Liberation Serif',serif;">2023年4月4日</div>
<div class="t" style="left:357.5px;top:665.5px;font-size:19.5px;line-height:19.5px;color:#000;font-weight:normal;font-family:'Liberation Serif',serif;">星期二</div>
<div class="t" style="left:522.5px;top:665.5px;font-size:19.5px;line-height:19.5px;color:#000;font-weight:normal;font-family:'Liberation Serif',serif;">市场部</div>
<div class="t" style="left:718.5px;top:665.5px;font-size:19.5px;line-height:19.5px;color:#000;font-weight:normal;font-family:'Liberation Serif',serif;">郑洋</div>
<div class="t" style="left:920.5px;top:665.5px;font-size:19.5px;line-height:19.5px;color:#000;font-weight:normal;font-family:'Liberation Serif',serif;">石家庄</div>
<div class="t" style="left:1130.5px;top:665.5px;font-size:19.5px;line-height:19.5px;color:#000;font-weight:normal;font-family:'Liberation Serif',serif;">59</div>
<div class="b" style="left:131px;top:268px;width:173px;height:2px;background:#1f6e45;"></div>
<div class="b" style="left:131px;top:268px;width:2px;height:422px;background:#1f6e45;"></div>
<div class="b" style="left:302px;top:268px;width:2px;height:418px;background:#1f6e45;"></div>
<div class="b" style="left:131px;top:688px;width:168px;height:2px;background:#1f6e45;"></div>
<div class="b" style="left:299px;top:684px;width:7px;height:7px;background:#ffffff;"></div>
<div class="b" style="left:302px;top:268px;width:2px;height:416px;background:#1f6e45;"></div>
<div class="b" style="left:300px;top:686px;width:5px;height:5px;background:#1f6e45;"></div>
<div class="b" style="left:864px;top:122px;width:244px;height:362px;background:#f0f0f0;box-shadow:0 1px 2px rgba(0,0,0,0.12), inset 1px -1px 0 #ababab, inset 0 1px 0 #e6e6e6"></div>
<div class="b" style="left:865px;top:122px;width:242px;height:54px;background:#9fd5b7;box-shadow:inset 0 1px 0 #d4eddd"></div>
<svg class="s" style="left:873px;top:131px;" width="41" height="39" viewBox="0 0 41 39"><rect x="0.5" y="0.5" width="36" height="35" fill="#fff"/><rect x="10" y="8" width="17" height="6" fill="#e3b462"/><path d="M9.5 0V36M27.5 0V36M0 7.5H37M0 14.5H37M0 21.5H37M0 28.5H37" stroke="#8a8a8a" stroke-width="1"/><rect x="0.5" y="0.5" width="36" height="35" fill="none" stroke="#444"/><rect x="19.5" y="21.5" width="20" height="16" fill="#fff" stroke="#444"/><path d="M27 24L22 26.5L27 29M22 31H27M22 33.5H27M30 29L36 32L30 35" stroke="#333" stroke-width="1.1" fill="none"/></svg>
<div class="t" style="left:919.0px;top:141.4px;font-size:15px;line-height:15px;color:#1e1e1e;font-weight:bold;font-family:'Liberation Sans',sans-serif;transform:scaleX(1.0273);transform-origin:0 0;">突出显示单元格规则(<u>H</u>)</div>
<svg class="s" style="left:1090px;top:144.4px;" width="5" height="9" viewBox="0 0 5 9"><path d="M0 0L5 4.5L0 9Z" fill="#666"/></svg>
<svg class="s" style="left:873px;top:185px;" width="41" height="39" viewBox="0 0 41 39"><rect x="0.5" y="0.5" width="36" height="35" fill="#fff"/><rect x="10" y="1" width="17" height="20" fill="#e3b462"/><path d="M18.5 19V4M14 8.5L18.5 3L23 8.5" stroke="#222" stroke-width="2.2" fill="none"/><path d="M9.5 0V36M27.5 0V36M0 7.5H37M0 14.5H37M0 21.5H37M0 28.5H37" stroke="#8a8a8a" stroke-width="1"/><rect x="0.5" y="0.5" width="36" height="35" fill="none" stroke="#444"/><rect x="19.5" y="21.5" width="20" height="16" fill="#fff" stroke="#444"/><text x="21" y="35" font-family="Liberation Sans" font-size="14" fill="#222">10</text></svg>
<div class="t" style="left:920.0px;top:194.5px;font-size:15px;line-height:15px;color:#444444;font-weight:bold;font-family:'Liberation Sans',sans-serif;transform:scaleX(1.0092);transform-origin:0 0;">项目选取规则(<u>T</u>)</div>
<svg class="s" style="left:1090px;top:197.5px;" width="5" height="9" viewBox="0 0 5 9"><path d="M0 0L5 4.5L0 9Z" fill="#666"/></svg>
<svg class="s" style="left:873px;top:239px;" width="41" height="39" viewBox="0 0 41 39"><rect x="0.5" y="0.5" width="36" height="35" fill="#fff"/><rect x="10" y="1" width="14" height="6" fill="#2a5a95"/><rect x="10" y="8" width="5" height="6" fill="#2a5a95"/><rect x="10" y="15" width="12" height="6" fill="#2a5a95"/><rect x="10" y="22" width="14" height="6" fill="#2a5a95"/><rect x="10" y="29" width="10" height="6" fill="#2a5a95"/><path d="M23 4.5H26M23 11.5H26M23 18.5H26M23 25.5H26M23 32.5H26" stroke="#333"/><path d="M9.5 0V36M27.5 0V36M0 7.5H37M0 14.5H37M0 21.5H37M0 28.5H37" stroke="#8a8a8a" stroke-width="1"/><rect x="0.5" y="0.5" width="36" height="35" fill="none" stroke="#444"/></svg>
<div class="t" style="left:920.0px;top:250.0px;font-size:15px;line-height:15px;color:#444444;font-weight:bold;font-family:'Liberation Sans',sans-serif;transform:scaleX(1.0354);transform-origin:0 0;">数据条(<u>D</u>)</div>
<svg class="s" style="left:1090px;top:253px;" width="5" height="9" viewBox="0 0 5 9"><path d="M0 0L5 4.5L0 9Z" fill="#666"/></svg>
<svg class="s" style="left:873px;top:292px;" width="41" height="39" viewBox="0 0 41 39"><rect x="0.5" y="0.5" width="36" height="35" fill="#fff"/><rect x="10" y="1" width="17" height="6" fill="#2a5a95"/><rect x="10" y="8" width="17" height="6" fill="#4a8c79"/><rect x="10" y="15" width="17" height="6" fill="#e9c088"/><rect x="10" y="22" width="17" height="6" fill="#e07020"/><rect x="10" y="29" width="17" height="6" fill="#c9431e"/><path d="M18 4.5H25M18 11.5H25M18 18.5H25M18 25.5H25M18 32.5H25" stroke="#222"/><path d="M9.5 0V36M27.5 0V36M0 7.5H37M0 14.5H37M0 21.5H37M0 28.5H37" stroke="#8a8a8a" stroke-width="1"/><rect x="0.5" y="0.5" width="36" height="35" fill="none" stroke="#444"/></svg>
<div class="t" style="left:920.0px;top:303.0px;font-size:15px;line-height:15px;color:#444444;font-weight:bold;font-family:'Liberation Sans',sans-serif;transform:scaleX(1.0143);transform-origin:0 0;">色阶(<u>S</u>)</div>
<svg class="s" style="left:1090px;top:306px;" width="5" height="9" viewBox="0 0 5 9"><path d="M0 0L5 4.5L0 9Z" fill="#666"/></svg>
<svg class="s" style="left:873px;top:345px;" width="41" height="39" viewBox="0 0 41 39"><rect x="0.5" y="0.5" width="36" height="35" fill="#fff"/><circle cx="14" cy="4" r="1.6" fill="#4a8c79"/><circle cx="14" cy="11" r="1.6" fill="#d07030"/><circle cx="14" cy="18" r="1.6" fill="#4a8c79"/><circle cx="14" cy="25" r="1.6" fill="#d07030"/><circle cx="14" cy="32" r="1.6" fill="#4a8c79"/><path d="M18 4.5H25M18 11.5H25M18 18.5H25M18 25.5H25M18 32.5H25" stroke="#333"/><path d="M9.5 0V36M27.5 0V36M0 7.5H37M0 14.5H37M0 21.5H37M0 28.5H37" stroke="#8a8a8a" stroke-width="1"/><rect x="0.5" y="0.5" width="36" height="35" fill="none" stroke="#444"/></svg>
<div class="t" style="left:919.0px;top:356.0px;font-size:15px;line-height:15px;color:#444444;font-weight:bold;font-family:'Liberation Sans',sans-serif;transform:scaleX(1.0345);transform-origin:0 0;">图标集(<u>I</u>)</div>
<svg class="s" style="left:1090px;top:359px;" width="5" height="9" viewBox="0 0 5 9"><path d="M0 0L5 4.5L0 9Z" fill="#666"/></svg>
<div class="b" style="left:920px;top:229px;width:187px;height:1px;background:#d7d7d7;"></div>
<div class="b" style="left:866px;top:389px;width:241px;height:1px;background:#d7d7d7;"></div>
<svg class="s" style="left:871px;top:397px;" width="22" height="20" viewBox="0 0 22 20"><rect x="0.5" y="0.5" width="16" height="16" fill="#fff" stroke="#3a3a3a"/><rect x="1" y="3" width="15" height="8" fill="#fff6dc"/><path d="M4.5 0V3M12.5 0V3M0 11.5H17M4.5 11V17M12.5 11V17M0 3.5H2M15 3.5H17" stroke="#777"/><rect x="4" y="4" width="9" height="6" rx="1" fill="#d9b46a"/></svg>
<div class="t" style="left:900.7px;top:399.0px;font-size:15px;line-height:15px;color:#444444;font-weight:normal;font-family:'Liberation Sans',sans-serif;transform:scaleX(1.0220);transform-origin:0 0;">新建规则(<u>N</u>)...</div>
<svg class="s" style="left:871px;top:426px;" width="22" height="20" viewBox="0 0 22 20"><rect x="0.5" y="0.5" width="16" height="16" fill="#fff" stroke="#3a3a3a"/><rect x="1" y="3" width="15" height="8" fill="#fff6dc"/><path d="M4.5 0V3M12.5 0V3M0 11.5H17M4.5 11V17M12.5 11V17M0 3.5H2M15 3.5H17" stroke="#777"/><rect x="4" y="4" width="9" height="6" rx="1" fill="#d9b46a"/><path d="M12 11H17V17H11Z" fill="#f0f0f0"/><path d="M10 17.5L16.5 11.5L19.5 14.5L13 20.5Z" fill="#d65b7c"/></svg>
<div class="t" style="left:900.7px;top:428.8px;font-size:15px;line-height:15px;color:#444444;font-weight:normal;font-family:'Liberation Sans',sans-serif;transform:scaleX(1.0063);transform-origin:0 0;">清除规则(<u>C</u>)</div>
<svg class="s" style="left:1090px;top:432px;" width="5" height="9" viewBox="0 0 5 9"><path d="M0 0L5 4.5L0 9Z" fill="#666"/></svg>
<svg class="s" style="left:869px;top:456px;" width="22" height="20" viewBox="0 0 22 20"><path d="M0.5 19V0.5H17" fill="none" stroke="#3a3a3a"/><rect x="2.5" y="2.5" width="17" height="16" fill="#fff" stroke="#3a3a3a"/><rect x="3" y="5" width="16" height="8" fill="#fff6dc"/><path d="M3 13.5H19M7.5 13V19M15.5 13V19" stroke="#777"/><rect x="6" y="6" width="10" height="6" rx="1" fill="#d9b46a"/></svg>
<div class="t" style="left:900.7px;top:458.7px;font-size:15px;line-height:15px;color:#444444;font-weight:normal;font-family:'Liberation Sans',sans-serif;">管理规则(<u>R</u>)...</div>
<div class="b" style="left:1107px;top:124px;width:181px;height:406px;background:#f0f0f0;box-shadow:1px 1px 2px rgba(0,0,0,0.15), inset 1px -1px 0 #ababab, inset -1px 0 0 #ababab"></div>
<svg class="s" style="left:1116px;top:133px;" width="41" height="39" viewBox="0 0 41 39"><rect x="0.5" y="0.5" width="36" height="35" fill="#fff"/><rect x="10" y="15" width="17" height="6" fill="#e3b462"/><path d="M9.5 0V36M27.5 0V36M0 7.5H37M0 14.5H37M0 21.5H37M0 28.5H37" stroke="#8a8a8a" stroke-width="1"/><rect x="0.5" y="0.5" width="36" height="35" fill="none" stroke="#444"/><rect x="19.5" y="21.5" width="20" height="16" fill="#fff" stroke="#444"/><path d="M25 25.5L34 29.5L25 33.5" stroke="#333" stroke-width="1.3" fill="none"/></svg>
<div class="t" style="left:1162.0px;top:144.0px;font-size:15px;line-height:15px;color:#333333;font-weight:bold;font-family:'Liberation Sans',sans-serif;transform:scaleX(1.0468);transform-origin:0 0;">大于(<u>G</u>)...</div>
<svg class="s" style="left:1116px;top:186px;" width="41" height="39" viewBox="0 0 41 39"><rect x="0.5" y="0.5" width="36" height="35" fill="#fff"/><rect x="10" y="15" width="17" height="6" fill="#e3b462"/><path d="M9.5 0V36M27.5 0V36M0 7.5H37M0 14.5H37M0 21.5H37M0 28.5H37" stroke="#8a8a8a" stroke-width="1"/><rect x="0.5" y="0.5" width="36" height="35" fill="none" stroke="#444"/><rect x="19.5" y="21.5" width="20" height="16" fill="#fff" stroke="#444"/><path d="M34 25.5L25 29.5L34 33.5" stroke="#333" stroke-width="1.3" fill="none"/></svg>
<div class="t" style="left:1163.0px;top:197.0px;font-size:15px;line-height:15px;color:#333333;font-weight:bold;font-family:'Liberation Sans',sans-serif;transform:scaleX(1.0164);transform-origin:0 0;">小于(<u>L</u>)...</div>
<svg class="s" style="left:1116px;top:239px;" width="41" height="39" viewBox="0 0 41 39"><rect x="0.5" y="0.5" width="36" height="35" fill="#fff"/><rect x="1" y="8" width="8" height="6" fill="#2a5a95"/><rect x="28" y="8" width="8" height="6" fill="#2a5a95"/><rect x="10" y="15" width="17" height="6" fill="#e3b462"/><path d="M9.5 0V36M27.5 0V36M0 7.5H37M0 14.5H37M0 21.5H37M0 28.5H37" stroke="#8a8a8a" stroke-width="1"/><rect x="0.5" y="0.5" width="36" height="35" fill="none" stroke="#444"/></svg>
<div class="t" style="left:1163.0px;top:250.0px;font-size:15px;line-height:15px;color:#333333;font-weight:bold;font-family:'Liberation Sans',sans-serif;transform:scaleX(1.0095);transform-origin:0 0;">介于(<u>B</u>)...</div>
<svg class="s" style="left:1116px;top:292px;" width="41" height="39" viewBox="0 0 41 39"><rect x="0.5" y="0.5" width="36" height="35" fill="#fff"/><rect x="10" y="15" width="17" height="6" fill="#e3b462"/><path d="M9.5 0V36M27.5 0V36M0 7.5H37M0 14.5H37M0 21.5H37M0 28.5H37" stroke="#8a8a8a" stroke-width="1"/><rect x="0.5" y="0.5" width="36" height="35" fill="none" stroke="#444"/><rect x="19.5" y="21.5" width="20" height="16" fill="#fff" stroke="#444"/><path d="M25 27.5H34M25 31.5H34" stroke="#333" stroke-width="1.3"/></svg>
<div class="t" style="left:1163.0px;top:303.0px;font-size:15px;line-height:15px;color:#333333;font-weight:bold;font-family:'Liberation Sans',sans-serif;transform:scaleX(1.0097);transform-origin:0 0;">等于(<u>E</u>)...</div>
<svg class="s" style="left:1116px;top:345px;" width="41" height="39" viewBox="0 0 41 39"><rect x="0.5" y="0.5" width="36" height="35" fill="#fff"/><rect x="10" y="15" width="17" height="6" fill="#e3b462"/><path d="M9.5 0V36M27.5 0V36M0 7.5H37M0 14.5H37M0 21.5H37M0 28.5H37" stroke="#8a8a8a" stroke-width="1"/><rect x="0.5" y="0.5" width="36" height="35" fill="none" stroke="#444"/><rect x="19.5" y="21.5" width="20" height="16" fill="#fff" stroke="#444"/><text x="21.5" y="34.5" font-family="Liberation Serif" font-size="13" font-weight="bold" fill="#222">ab</text></svg>
<div class="t" style="left:1163.0px;top:356.0px;font-size:15px;line-height:15px;color:#333333;font-weight:bold;font-family:'Liberation Sans',sans-serif;transform:scaleX(1.0220);transform-origin:0 0;">文本包含(<u>T</u>)...</div>
<svg class="s" style="left:1116px;top:398px;" width="41" height="39" viewBox="0 0 41 39"><rect x="0.5" y="0.5" width="36" height="35" fill="#fff"/><rect x="10" y="15" width="24" height="6" fill="#e3b462"/><path d="M9.5 0V36M27.5 0V36M0 7.5H37M0 14.5H37M0 21.5H37M0 28.5H37" stroke="#8a8a8a" stroke-width="1"/><rect x="0.5" y="0.5" width="36" height="35" fill="none" stroke="#444"/><rect x="19.5" y="19.5" width="20" height="18" fill="#fff" stroke="#444"/><rect x="19" y="19" width="21" height="3" fill="#444"/><path d="M24.5 22V38M29.5 22V38M34.5 22V38M19 26.5H40M19 31.5H40" stroke="#888"/><rect x="30" y="27" width="4" height="4" fill="none" stroke="#d07030"/></svg>
<div class="t" style="left:1163.0px;top:409.0px;font-size:15px;line-height:15px;color:#333333;font-weight:bold;font-family:'Liberation Sans',sans-serif;transform:scaleX(1.0183);transform-origin:0 0;">发生日期(<u>A</u>)...</div>
<svg class="s" style="left:1116px;top:451px;" width="41" height="39" viewBox="0 0 41 39"><rect x="0.5" y="0.5" width="36" height="35" fill="#fff"/><rect x="10" y="8" width="17" height="6" fill="#e3b462"/><rect x="10" y="22" width="17" height="6" fill="#e3b462"/><path d="M13 11.5H20M13 25.5H20" stroke="#a88040"/><path d="M9.5 0V36M27.5 0V36M0 7.5H37M0 14.5H37M0 21.5H37M0 28.5H37" stroke="#8a8a8a" stroke-width="1"/><rect x="0.5" y="0.5" width="36" height="35" fill="none" stroke="#444"/></svg>
<div class="t" style="left:1163.0px;top:462.0px;font-size:15px;line-height:15px;color:#333333;font-weight:bold;font-family:'Liberation Sans',sans-serif;transform:scaleX(1.0256);transform-origin:0 0;">重复值(<u>D</u>)...</div>
<div class="b" style="left:1108px;top:497px;width:178px;height:31px;background:#999999;"></div>
<div class="t" style="left:1144.4px;top:505.0px;font-size:15px;line-height:15px;color:#262626;font-weight:normal;font-family:'Liberation Sans',sans-serif;transform:scaleX(1.0355);transform-origin:0 0;">其他规则(<u>M</u>)...</div>
</body></html>
